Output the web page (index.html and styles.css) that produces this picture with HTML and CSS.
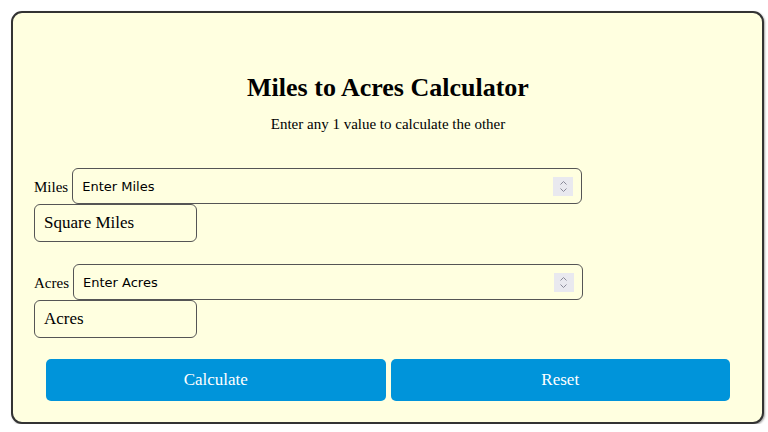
FILE: index.html
```html
<!DOCTYPE html>
<html lang="en">
<head>
<meta charset="utf-8">
<title>Miles to Acres Calculator</title>
<link rel="stylesheet" href="styles.css">
</head>
<body>
<div class="card">
  <h1 class="title">Miles to Acres Calculator</h1>
  <p class="subtitle">Enter any 1 value to calculate the other</p>

  <div class="field">
    <div class="row">
      <label class="label" for="miles">Miles</label>
      <div class="numbox">
        <input class="num" id="miles" type="text" placeholder="Enter Miles">
        <span class="spin"><svg width="9" height="13" viewBox="0 0 9 13"><path d="M1.5 4.5 L4.5 1.5 L7.5 4.5 M1.5 8.5 L4.5 11.5 L7.5 8.5" fill="none" stroke="#8a8a99" stroke-width="1"/></svg></span>
      </div>
    </div>
    <div class="unit">Square Miles</div>
  </div>

  <div class="field">
    <div class="row">
      <label class="label" for="acres">Acres</label>
      <div class="numbox">
        <input class="num" id="acres" type="text" placeholder="Enter Acres">
        <span class="spin"><svg width="9" height="13" viewBox="0 0 9 13"><path d="M1.5 4.5 L4.5 1.5 L7.5 4.5 M1.5 8.5 L4.5 11.5 L7.5 8.5" fill="none" stroke="#8a8a99" stroke-width="1"/></svg></span>
      </div>
    </div>
    <div class="unit">Acres</div>
  </div>

  <div class="buttons">
    <button class="btn" type="button">Calculate</button>
    <button class="btn" type="button">Reset</button>
  </div>
</div>
</body>
</html>
```
FILE: styles.css
```css
html, body {
  margin: 0;
  padding: 0;
  background: #ffffff;
}
body {
  font-family: "Liberation Serif", "Times New Roman", serif;
  color: #000;
}
.card {
  box-sizing: border-box;
  width: 753px;
  height: 413px;
  margin: 11px 0 0 11px;
  border: 2px solid #333;
  border-radius: 11px;
  background: #ffffe0;
  box-shadow: 1px 1px 2px rgba(0,0,0,0.35);
  padding: 60px 20px 0 21px;
}
.title {
  margin: 0;
  text-align: center;
  font-size: 26px;
  font-weight: bold;
  line-height: 30px;
}
.subtitle {
  margin: 12px 0 0;
  text-align: center;
  font-size: 15px;
  line-height: 18px;
}
.field {
  margin-top: 35px;
}
.field + .field {
  margin-top: 22px;
}
.row {
  display: flex;
  align-items: center;
}
.label {
  font-size: 15px;
  margin-right: 4px;
  padding-top: 2px;
}
.numbox {
  box-sizing: border-box;
  width: 510px;
  height: 36px;
  display: flex;
  align-items: center;
  border: 1px solid #555;
  border-radius: 6px;
  background: #ffffe0;
  padding: 0 8px 0 9px;
}
.num {
  flex: 1;
  min-width: 0;
  border: 0;
  outline: 0;
  background: transparent;
  font-family: "DejaVu Sans", Tahoma, sans-serif;
  font-size: 13px;
  color: #000;
  padding: 0;
}
.num::placeholder {
  color: #000;
}
.spin {
  width: 20px;
  height: 19px;
  background: #e9e9ef;
  display: flex;
  align-items: center;
  justify-content: center;
}
.unit {
  box-sizing: border-box;
  width: 163px;
  height: 38px;
  margin-top: 0;
  border: 1px solid #555;
  border-radius: 6px;
  padding: 0 9px;
  font-size: 17px;
  line-height: 36px;
}
.buttons {
  display: flex;
  gap: 5px;
  margin: 21px 12px 0 12px;
}
.btn {
  flex: 1;
  height: 42px;
  border: 0;
  border-radius: 5px;
  background: #0094da;
  color: #fff;
  font-family: "Liberation Serif", "Times New Roman", serif;
  font-size: 17px;
  padding: 0;
}
```
